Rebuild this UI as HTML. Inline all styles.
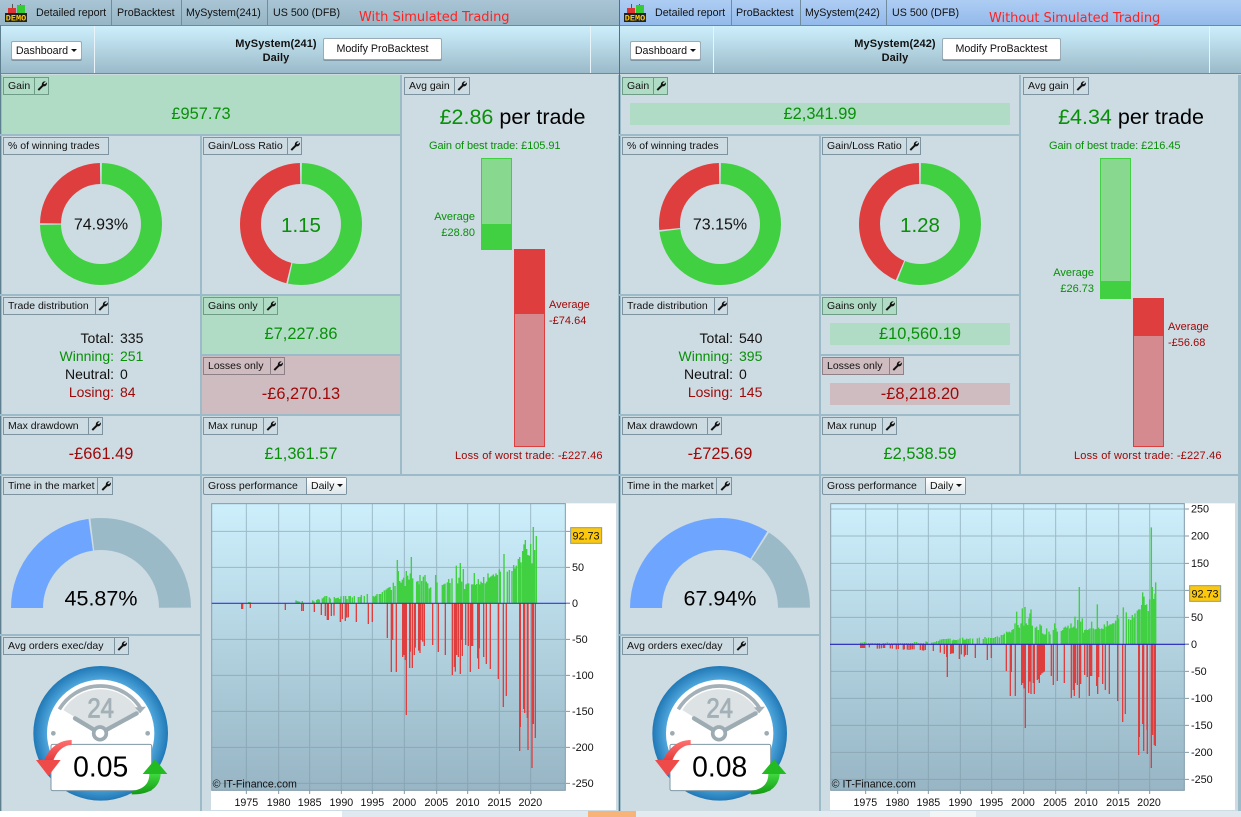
<!DOCTYPE html>
<html><head><meta charset="utf-8"><title>Detailed report</title>
<style>
html,body{margin:0;padding:0;background:#fff}
body{width:1241px;height:817px;overflow:hidden;position:relative;font-family:"Liberation Sans",Arial,sans-serif;font-size:11px;color:#111}
.p{position:absolute;top:0;height:811px;width:622px;overflow:hidden;background:#cddbe2}
.p div,.p svg,.p span.a{position:absolute}
.tb{left:0;top:0;width:622px;height:25px;background:linear-gradient(#a9c5d5,#96b5c5)}
.p2 .tb{background:linear-gradient(#aecdf3,#93baeb)}
.tt{top:5px;line-height:16px;white-space:nowrap;color:#111;font-size:10.7px}
.ts{top:0;width:1px;height:25px;background:#6f8d9e}
.hd{left:0;top:25px;width:622px;height:49px;background:linear-gradient(#cdeffc,#9bbac9);border-bottom:1px solid #6d8a99;border-top:1px solid #6d8a99;box-sizing:border-box}
.hs{top:26px;width:1px;height:47px;background:#e8f4f9}
.btn{background:#fff;border:1px solid #98abb6;border-radius:2px;box-sizing:border-box;text-align:center;box-shadow:0 1px 0 #7f97a5;white-space:nowrap;font-size:10.7px}
.arrow{display:inline-block;width:0;height:0;border:3px solid transparent;border-top:3px solid #111;border-bottom:0;margin-left:3px;vertical-align:2px}
.ln{background:#9dbac8}
.lb{height:18px;box-sizing:border-box;border:1px solid #7d939f;white-space:nowrap;line-height:17px}
.lb span{position:absolute;left:4px;top:0;font-size:10.5px;line-height:17px;color:#111}
.lb i{position:absolute;top:0;bottom:0;width:1px;background:#7d939f}
.lb svg{top:3px;width:10px;height:10px;margin-left:1px}
.g{background:#b0dbc4}.r{background:#cfbcc0}
.lg{border-color:#6f9c86;background:#b0dbc4}.lg i{background:#6f9c86}
.lr{border-color:#8d8087;background:#cfbcc0}.lr i{background:#8d8087}
.v{font-size:16.4px;line-height:20px;text-align:center;white-space:nowrap}
.gc{color:#089008}.rc{color:#a00808}
.sm{font-size:11px;line-height:14px;white-space:nowrap}
.d{font-size:14px;line-height:18px;white-space:nowrap}
.gr{stroke:#7f9aa8;stroke-width:3;opacity:.6;fill:none}
.dy{background:linear-gradient(#fff,#dde6ea);line-height:17px;padding-left:4px;box-sizing:border-box;white-space:nowrap;font-size:10.5px}
</style></head><body>
<svg width="0" height="0" style="position:absolute"><defs>
<symbol id="w" viewBox="0 0 12 12"><path d="M10.6 .7a3.5 3.5 0 0 0-4.7 4.1L.7 10 2.4 11.7l5.2-5.3a3.5 3.5 0 0 0 4-4.7L9.7 3.8 8.2 3.7 8 2.4z" fill="#111"/></symbol>
<radialGradient id="ring"><stop offset="80%" stop-color="#4fa6dc"/><stop offset="100%" stop-color="#2078b6"/></radialGradient>
<linearGradient id="ra" x1="0" y1="0" x2="0" y2="1"><stop offset="0" stop-color="#ff7070"/><stop offset="1" stop-color="#e43b3b"/></linearGradient>
<linearGradient id="ga" x1="0" y1="0" x2="0" y2="1"><stop offset="0" stop-color="#3fd83f"/><stop offset="1" stop-color="#129a12"/></linearGradient>
<linearGradient id="pg" x1="0" y1="0" x2="0" y2="1"><stop offset="0" stop-color="#cdeffc"/><stop offset="1" stop-color="#97b5c4"/></linearGradient>
</defs></svg>

<!-- LEFT PANEL -->
<div class="p p1" style="left:0">
<div class="tb"></div>
<svg style="left:5px;top:4px" width="23" height="18" viewBox="0 0 23 18"><rect x="7" y="0" width="1" height="11" fill="#555"/><rect x="3" y="4" width="8" height="6" fill="#d33"/><rect x="15" y="0" width="1" height="9" fill="#555"/><rect x="12" y="1" width="8" height="8" fill="#3c3"/><rect x="0" y="9" width="22" height="9" fill="#222"/><text x="11" y="16.5" font-size="8.5" font-weight="bold" text-anchor="middle" fill="#fc0" font-family="Liberation Mono">DEMO</text></svg>
<div class="tt" style="left:36px">Detailed report</div><div class="ts" style="left:111px"></div>
<div class="tt" style="left:117px">ProBacktest</div><div class="ts" style="left:181px"></div>
<div class="tt" style="left:186px">MySystem(241)</div><div class="ts" style="left:267px"></div>
<div class="tt" style="left:273px">US 500 (DFB)</div>
<div style="left:359px;top:10px;font:13px/16px 'DejaVu Sans',sans-serif;color:#f22;white-space:nowrap;letter-spacing:-.03px">With Simulated Trading</div>
<div class="hd"></div><div class="hs" style="left:94px"></div><div class="hs" style="left:590px"></div>
<div class="btn" style="left:11px;top:41px;width:71px;height:19px;line-height:18px">Dashboard<span class="arrow"></span></div>
<div style="left:206px;top:37px;width:140px;text-align:center;font-weight:bold;line-height:14px;font-size:11px;letter-spacing:.1px;color:#111">MySystem(241)<br>Daily</div>
<div class="btn" style="left:323px;top:38px;width:119px;height:22px;line-height:21px">Modify ProBacktest</div>

<div class="g" style="left:2px;top:75px;width:398px;height:59px"></div>
<div class="g" style="left:202px;top:296px;width:198px;height:58px"></div>
<div class="r" style="left:202px;top:356px;width:198px;height:58px"></div>

<div style="left:0;top:25px;width:1px;height:786px;background:#5d7f90"></div>
<div class="ln" style="left:1px;top:75px;width:1px;height:736px"></div>
<div class="ln" style="left:200px;top:134px;width:2px;height:677px"></div>
<div class="ln" style="left:400px;top:75px;width:2px;height:400px"></div>
<div class="ln" style="left:0;top:134px;width:400px;height:2px"></div>
<div class="ln" style="left:0;top:294px;width:400px;height:2px"></div>
<div class="ln" style="left:200px;top:354px;width:200px;height:2px"></div>
<div class="ln" style="left:0;top:414px;width:400px;height:2px"></div>
<div class="ln" style="left:0;top:474px;width:619px;height:2px"></div>
<div class="ln" style="left:0;top:634px;width:200px;height:2px"></div>
<div class="ln" style="left:618px;top:75px;width:1px;height:736px"></div>

<div class="lb lg" style="left:3px;top:77px;width:46px"><span>Gain</span><i style="left:30px"></i><svg style="left:32px"><use href="#w"/></svg></div>
<div class="v gc" style="left:101px;top:104px;width:200px">£957.73</div>

<div class="lb" style="left:3px;top:137px;width:106px"><span>% of winning trades</span></div>
<svg style="left:30px;top:153px" width="142" height="142" viewBox="0 0 142 142"><g transform="rotate(-90 71 71)" fill="none" stroke-width="21"><circle cx="71" cy="71" r="50.5" pathLength="100" stroke="#41d041" stroke-dasharray="74.5 100" stroke-dashoffset="-.25"/><circle cx="71" cy="71" r="50.5" pathLength="100" stroke="#df3e3e" stroke-dasharray="0 75.2 24.5 100"/></g><text x="71" y="76.5" font-size="16" text-anchor="middle" fill="#111" font-family="Liberation Sans">74.93%</text></svg>

<div class="lb" style="left:203px;top:137px;width:99px"><span>Gain/Loss Ratio</span><i style="left:83px"></i><svg style="left:85px"><use href="#w"/></svg></div>
<svg style="left:230px;top:153px" width="142" height="142" viewBox="0 0 142 142"><g transform="rotate(-90 71 71)" fill="none" stroke-width="21"><circle cx="71" cy="71" r="50.5" pathLength="100" stroke="#41d041" stroke-dasharray="53.2 100" stroke-dashoffset="-.25"/><circle cx="71" cy="71" r="50.5" pathLength="100" stroke="#df3e3e" stroke-dasharray="0 53.9 45.8 100"/></g><text x="71" y="79" font-size="20.5" text-anchor="middle" fill="#089008" font-family="Liberation Sans">1.15</text></svg>

<div class="lb" style="left:3px;top:297px;width:106px"><span>Trade distribution</span><i style="left:91px"></i><svg style="left:93px"><use href="#w"/></svg></div>
<div class="d" style="left:14px;top:329px;width:100px;text-align:right">Total:</div><div class="d" style="left:120px;top:329px">335</div>
<div class="d gc" style="left:14px;top:347px;width:100px;text-align:right">Winning:</div><div class="d gc" style="left:120px;top:347px">251</div>
<div class="d" style="left:14px;top:365px;width:100px;text-align:right">Neutral:</div><div class="d" style="left:120px;top:365px">0</div>
<div class="d rc" style="left:14px;top:383px;width:100px;text-align:right">Losing:</div><div class="d rc" style="left:120px;top:383px">84</div>

<div class="lb lg" style="left:203px;top:297px;width:75px"><span>Gains only</span><i style="left:59px"></i><svg style="left:61px"><use href="#w"/></svg></div>
<div class="v gc" style="left:201px;top:324px;width:200px">£7,227.86</div>
<div class="lb lr" style="left:203px;top:357px;width:82px"><span>Losses only</span><i style="left:66px"></i><svg style="left:68px"><use href="#w"/></svg></div>
<div class="v rc" style="left:201px;top:384px;width:200px">-£6,270.13</div>

<div class="lb" style="left:3px;top:417px;width:100px"><span>Max drawdown</span><i style="left:84px"></i><svg style="left:86px"><use href="#w"/></svg></div>
<div class="v rc" style="left:1px;top:444px;width:200px">-£661.49</div>
<div class="lb" style="left:203px;top:417px;width:75px"><span>Max runup</span><i style="left:59px"></i><svg style="left:61px"><use href="#w"/></svg></div>
<div class="v gc" style="left:201px;top:444px;width:200px">£1,361.57</div>

<div class="lb" style="left:404px;top:77px;width:66px"><span>Avg gain</span><i style="left:49px"></i><svg style="left:51px"><use href="#w"/></svg></div>
<div style="left:402px;top:104px;width:221px;text-align:center;font-size:21.5px;line-height:26px;white-space:nowrap;color:#000"><span class="gc">£2.86</span> per trade</div>
<div class="sm gc" style="left:429px;top:139px;letter-spacing:-.07px">Gain of best trade: £105.91</div>
<div style="left:481px;top:158px;width:31px;height:92px;box-sizing:border-box;border:1px solid #41d041;background:#88d890"></div>
<div style="left:481px;top:224px;width:31px;height:26px;background:#41d041"></div>
<div style="left:514px;top:249px;width:31px;height:198px;box-sizing:border-box;border:1px solid #df3e3e;background:#d58a90"></div>
<div style="left:514px;top:249px;width:31px;height:65px;background:#df3e3e"></div>
<div class="sm gc" style="left:415px;top:210px;width:60px;text-align:right">Average</div>
<div class="sm gc" style="left:415px;top:226px;width:60px;text-align:right">£28.80</div>
<div class="sm rc" style="left:549px;top:298px">Average</div>
<div class="sm rc" style="left:549px;top:314px">-£74.64</div>
<div class="sm rc" style="left:455px;top:449px;letter-spacing:.18px">Loss of worst trade: -£227.46</div>

<div class="lb" style="left:3px;top:477px;width:110px"><span>Time in the market</span><i style="left:93px"></i><svg style="left:96px"><use href="#w"/></svg></div>
<svg style="left:0;top:510px" width="200" height="110" viewBox="0 0 200 110"><g fill="none" stroke-width="32"><path d="M27 98A74 74 0 0 1 175 98" pathLength="100" stroke="#6ea6ff" stroke-dasharray="45.6 100"/><path d="M27 98A74 74 0 0 1 175 98" pathLength="100" stroke="#9bbac8" stroke-dasharray="0 46.3 53.7 100"/></g><text x="101" y="95.5" font-size="21.5" text-anchor="middle" fill="#000" font-family="Liberation Sans">45.87%</text></svg>

<div class="lb" style="left:3px;top:637px;width:126px"><span>Avg orders exec/day</span><i style="left:110px"></i><svg style="left:112px"><use href="#w"/></svg></div>
<svg style="left:0;top:630px" width="210" height="187" viewBox="0 0 630 561">
<circle cx="302" cy="310" r="202" fill="url(#ring)"/><circle cx="302" cy="310" r="161" fill="#fff"/>
<path d="M302 310L190 240A132 132 0 0 1 414 240Z" fill="#dde2e4"/>
<path d="M178 238A143 143 0 0 1 424 238" fill="none" stroke="#a3b0b7" stroke-width="11"/><path d="M405 232L438 230 420 250Z" fill="#a3b0b7"/>
<text x="262" y="262" font-size="84" textLength="80" lengthAdjust="spacingAndGlyphs" fill="#a3b0b7" stroke="#a3b0b7" stroke-width="2.5" font-family="Liberation Sans">24</text>
<path d="M300 310L225 265M300 310L410 250" stroke="#9dabb3" stroke-width="13" stroke-linecap="round"/>
<circle cx="300" cy="310" r="19" fill="#fff" stroke="#9dabb3" stroke-width="11"/><circle cx="160" cy="310" r="7" fill="#9dabb3"/><circle cx="443" cy="310" r="7" fill="#9dabb3"/>
<rect x="153" y="343" width="302" height="139" rx="5" fill="#fff" stroke="#7f97a5" stroke-width="3"/>
<text x="302" y="440" font-size="85" text-anchor="middle" fill="#000" font-family="Liberation Sans">0.05</text>
<path d="M215 330C180 330 150 350 132 392L160 392C170 365 190 345 215 345Z" fill="url(#ra)"/><path d="M108 390H182L145 438Z" fill="#ee4a4a"/>
<path d="M448 432C448 462 430 478 395 483L395 493C450 495 480 470 482 432Z" fill="url(#ga)"/><path d="M428 432H502L465 388Z" fill="#22bb22"/></svg>

<div class="lb" style="left:203px;top:477px;width:144px;border-radius:2px"><span>Gross performance</span><i style="left:102px"></i></div>
<div class="dy" style="left:307px;top:478px;width:39px;height:16px">Daily<span class="arrow"></span></div>

<svg style="left:200px;top:475px" width="420" height="342" viewBox="0 0 1260 1026">
<rect x="33" y="85" width="1215" height="920" fill="#fff"/>
<rect x="35" y="86" width="1061" height="860" fill="url(#pg)" stroke="#7f9aa8" stroke-width="3"/>
<path class="gr" d="M139 86V946M236 86V946M329 86V946M424 86V946M517 86V946M613 86V946M710 86V946M803 86V946M898 86V946M992 86V946M35 169H1096M35 277H1096M35 493H1096M35 601H1096M35 709H1096M35 817H1096M35 925H1096"/>
<path d="M139 946V957M236 946V957M329 946V957M424 946V957M517 946V957M613 946V957M710 946V957M803 946V957M898 946V957M992 946V957" stroke="#7f9aa8" stroke-width="3"/>
<path fill="none" stroke="#41d041" stroke-width="4.2" d="M146 385V381M150 385V381M288 385V376M291 385V378M295 385V379M299 385V380M307 385V378M338 385V376M342 385V379M350 385V375M354 385V372M358 385V374M367 385V370M371 385V367M375 385V363M380 385V363M388 385V367M391 385V371M403 385V366M407 385V370M411 385V369M415 385V368M419 385V372M423 385V364M431 385V363M437 385V363M441 385V372M447 385V363M451 385V363M457 385V367M463 385V363M475 385V366M480 385V366M484 385V360M493 385V363M502 385V357M519 385V363M523 385V365M527 385V362M531 385V357M538 385V357M542 385V357M547 385V351M553 385V346M558 385V344M562 385V340M566 385V338M570 385V336M574 385V345M580 385V323M585 385V333M592 385V255M595 385V288M599 385V318M603 385V323M607 385V314M611 385V308M615 385V333M619 385V288M623 385V302M627 385V314M631 385V295M634 385V246M638 385V310M650 385V320M654 385V318M658 385V328M660 385V300M665 385V318M670 385V305M675 385V300M679 385V320M683 385V325M688 385V340M692 385V337M707 385V300M711 385V322M727 385V330M731 385V328M735 385V326M742 385V322M746 385V312M750 385V324M756 385V310M769 385V272M773 385V325M777 385V308M781 385V264M785 385V320M790 385V282M794 385V342M798 385V328M802 385V325M806 385V325M815 385V328M819 385V328M823 385V294M827 385V330M830 385V327M835 385V312M839 385V328M843 385V320M847 385V324M851 385V306M856 385V325M860 385V320M864 385V295M868 385V308M872 385V305M876 385V302M880 385V298M884 385V304M888 385V295M892 385V300M898 385V283M901 385V290M912 385V237M922 385V290M928 385V285M936 385V288M941 385V270M945 385V280M949 385V272M955 385V252M959 385V246M963 385V262M968 385V228M972 385V208M976 385V195M980 385V222M984 385V240M988 385V242M992 385V207M996 385V265M1000 385V156M1004 385V225M1009 385V183"/>
<path fill="none" stroke="#df3e3e" stroke-width="4" d="M125 385V402M128 385V402M151 385V399M256 385V405M305 385V408M310 385V408M343 385V411M364 385V420M376 385V423M382 385V435M385 385V435M394 385V423M402 385V422M421 385V441M427 385V432M436 385V438M440 385V428M445 385V427M469 385V441M505 385V447M517 385V441M562 385V489M574 385V591M578 385V495M589 385V591M608 385V546M612 385V540M616 385V555M619 385V720M629 385V579M631 385V530M637 385V579M643 385V540M646 385V518M656 385V527M660 385V534M663 385V495M668 385V500M673 385V513M698 385V510M715 385V531M736 385V540M757 385V600M763 385V576M766 385V590M770 385V540M775 385V546M781 385V597M785 385V495M787 385V543M797 385V510M805 385V513M811 385V591M815 385V513M818 385V513M833 385V550M836 385V582M838 385V520M851 385V546M859 385V567M871 385V582M895 385V612M910 385V696M919 385V663M959 385V828M961 385V756M971 385V702M974 385V714M984 385V825M982 385V729M996 385V879M1000 385V747M1006 385V789"/>
<path d="M35 385H1110" stroke="#3333dd" stroke-width="3.5"/>
<path d="M1098 169H1110M1098 277H1110M1098 385H1110M1098 493H1110M1098 601H1110M1098 709H1110M1098 817H1110M1098 925H1110" stroke="#7f9aa8" stroke-width="3"/>
<g font-family="Liberation Sans" font-size="32.5" fill="#111" text-anchor="start"><text x="1116" y="288">50</text><text x="1116" y="396">0</text><text x="1116" y="504">-50</text><text x="1116" y="612">-100</text><text x="1116" y="720">-150</text><text x="1116" y="828">-200</text><text x="1116" y="936">-250</text></g>
<rect x="1112" y="158" width="93" height="47" fill="#fcc80c" stroke="#7f9aa8" stroke-width="3"/><text x="1158" y="194" font-size="32.5" text-anchor="middle" fill="#111" font-family="Liberation Sans">92.73</text>
<text x="38" y="938" font-size="32" fill="#111" font-family="Liberation Sans">© IT-Finance.com</text>
<g font-family="Liberation Sans" font-size="32" fill="#111" text-anchor="middle"><text x="139" y="993">1975</text><text x="236" y="993">1980</text><text x="329" y="993">1985</text><text x="424" y="993">1990</text><text x="517" y="993">1995</text><text x="613" y="993">2000</text><text x="709" y="993">2005</text><text x="803" y="993">2010</text><text x="898" y="993">2015</text><text x="991" y="993">2020</text></g>
</svg>
</div>

<!-- RIGHT PANEL -->
<div class="p p2" style="left:619px">
<div class="tb"></div>
<svg style="left:5px;top:4px" width="23" height="18" viewBox="0 0 23 18"><rect x="7" y="0" width="1" height="11" fill="#555"/><rect x="3" y="4" width="8" height="6" fill="#d33"/><rect x="15" y="0" width="1" height="9" fill="#555"/><rect x="12" y="1" width="8" height="8" fill="#3c3"/><rect x="0" y="9" width="22" height="9" fill="#222"/><text x="11" y="16.5" font-size="8.5" font-weight="bold" text-anchor="middle" fill="#fc0" font-family="Liberation Mono">DEMO</text></svg>
<div class="tt" style="left:36px">Detailed report</div><div class="ts" style="left:112px"></div>
<div class="tt" style="left:117px">ProBacktest</div><div class="ts" style="left:181px"></div>
<div class="tt" style="left:186px">MySystem(242)</div><div class="ts" style="left:267px"></div>
<div class="tt" style="left:273px">US 500 (DFB)</div>
<div style="left:370px;top:11px;font:13px/16px 'DejaVu Sans',sans-serif;color:#f22;white-space:nowrap;letter-spacing:-.05px">Without Simulated Trading</div>
<div class="hd"></div><div class="hs" style="left:94px"></div><div class="hs" style="left:590px"></div>
<div class="btn" style="left:11px;top:41px;width:71px;height:19px;line-height:18px">Dashboard<span class="arrow"></span></div>
<div style="left:206px;top:37px;width:140px;text-align:center;font-weight:bold;line-height:14px;font-size:11px;letter-spacing:.1px;color:#111">MySystem(242)<br>Daily</div>
<div class="btn" style="left:323px;top:38px;width:119px;height:22px;line-height:21px">Modify ProBacktest</div>

<div class="g" style="left:11px;top:103px;width:380px;height:22px"></div>
<div class="g" style="left:211px;top:323px;width:180px;height:22px"></div>
<div class="r" style="left:211px;top:383px;width:180px;height:22px"></div>

<div style="left:0;top:0;width:1px;height:811px;background:#4f7183"></div>
<div class="ln" style="left:1px;top:75px;width:1px;height:736px"></div>
<div class="ln" style="left:200px;top:134px;width:2px;height:677px"></div>
<div class="ln" style="left:400px;top:75px;width:2px;height:400px"></div>
<div class="ln" style="left:0;top:134px;width:400px;height:2px"></div>
<div class="ln" style="left:0;top:294px;width:400px;height:2px"></div>
<div class="ln" style="left:200px;top:354px;width:200px;height:2px"></div>
<div class="ln" style="left:0;top:414px;width:400px;height:2px"></div>
<div class="ln" style="left:0;top:474px;width:622px;height:2px"></div>
<div class="ln" style="left:0;top:634px;width:200px;height:2px"></div>
<div class="ln" style="left:619px;top:75px;width:3px;height:736px"></div>

<div class="lb lg" style="left:3px;top:77px;width:46px"><span>Gain</span><i style="left:30px"></i><svg style="left:32px"><use href="#w"/></svg></div>
<div class="v gc" style="left:101px;top:104px;width:200px">£2,341.99</div>

<div class="lb" style="left:3px;top:137px;width:106px"><span>% of winning trades</span></div>
<svg style="left:30px;top:153px" width="142" height="142" viewBox="0 0 142 142"><g transform="rotate(-90 71 71)" fill="none" stroke-width="21"><circle cx="71" cy="71" r="50.5" pathLength="100" stroke="#41d041" stroke-dasharray="72.7 100" stroke-dashoffset="-.25"/><circle cx="71" cy="71" r="50.5" pathLength="100" stroke="#df3e3e" stroke-dasharray="0 73.4 26.3 100"/></g><text x="71" y="76.5" font-size="16" text-anchor="middle" fill="#111" font-family="Liberation Sans">73.15%</text></svg>

<div class="lb" style="left:203px;top:137px;width:99px"><span>Gain/Loss Ratio</span><i style="left:83px"></i><svg style="left:85px"><use href="#w"/></svg></div>
<svg style="left:230px;top:153px" width="142" height="142" viewBox="0 0 142 142"><g transform="rotate(-90 71 71)" fill="none" stroke-width="21"><circle cx="71" cy="71" r="50.5" pathLength="100" stroke="#41d041" stroke-dasharray="55.8 100" stroke-dashoffset="-.25"/><circle cx="71" cy="71" r="50.5" pathLength="100" stroke="#df3e3e" stroke-dasharray="0 56.5 43.2 100"/></g><text x="71" y="79" font-size="20.5" text-anchor="middle" fill="#089008" font-family="Liberation Sans">1.28</text></svg>

<div class="lb" style="left:3px;top:297px;width:106px"><span>Trade distribution</span><i style="left:91px"></i><svg style="left:93px"><use href="#w"/></svg></div>
<div class="d" style="left:14px;top:329px;width:100px;text-align:right">Total:</div><div class="d" style="left:120px;top:329px">540</div>
<div class="d gc" style="left:14px;top:347px;width:100px;text-align:right">Winning:</div><div class="d gc" style="left:120px;top:347px">395</div>
<div class="d" style="left:14px;top:365px;width:100px;text-align:right">Neutral:</div><div class="d" style="left:120px;top:365px">0</div>
<div class="d rc" style="left:14px;top:383px;width:100px;text-align:right">Losing:</div><div class="d rc" style="left:120px;top:383px">145</div>

<div class="lb lg" style="left:203px;top:297px;width:75px"><span>Gains only</span><i style="left:59px"></i><svg style="left:61px"><use href="#w"/></svg></div>
<div class="v gc" style="left:201px;top:324px;width:200px">£10,560.19</div>
<div class="lb lr" style="left:203px;top:357px;width:82px"><span>Losses only</span><i style="left:66px"></i><svg style="left:68px"><use href="#w"/></svg></div>
<div class="v rc" style="left:201px;top:384px;width:200px">-£8,218.20</div>

<div class="lb" style="left:3px;top:417px;width:100px"><span>Max drawdown</span><i style="left:84px"></i><svg style="left:86px"><use href="#w"/></svg></div>
<div class="v rc" style="left:1px;top:444px;width:200px">-£725.69</div>
<div class="lb" style="left:203px;top:417px;width:75px"><span>Max runup</span><i style="left:59px"></i><svg style="left:61px"><use href="#w"/></svg></div>
<div class="v gc" style="left:201px;top:444px;width:200px">£2,538.59</div>

<div class="lb" style="left:404px;top:77px;width:66px"><span>Avg gain</span><i style="left:49px"></i><svg style="left:51px"><use href="#w"/></svg></div>
<div style="left:402px;top:104px;width:220px;text-align:center;font-size:21.5px;line-height:26px;white-space:nowrap;color:#000"><span class="gc">£4.34</span> per trade</div>
<div class="sm gc" style="left:430px;top:139px;letter-spacing:-.07px">Gain of best trade: £216.45</div>
<div style="left:481px;top:158px;width:31px;height:141px;box-sizing:border-box;border:1px solid #41d041;background:#88d890"></div>
<div style="left:481px;top:281px;width:31px;height:18px;background:#41d041"></div>
<div style="left:514px;top:298px;width:31px;height:149px;box-sizing:border-box;border:1px solid #df3e3e;background:#d58a90"></div>
<div style="left:514px;top:298px;width:31px;height:38px;background:#df3e3e"></div>
<div class="sm gc" style="left:415px;top:266px;width:60px;text-align:right">Average</div>
<div class="sm gc" style="left:415px;top:282px;width:60px;text-align:right">£26.73</div>
<div class="sm rc" style="left:549px;top:320px">Average</div>
<div class="sm rc" style="left:549px;top:336px">-£56.68</div>
<div class="sm rc" style="left:455px;top:449px;letter-spacing:.18px">Loss of worst trade: -£227.46</div>

<div class="lb" style="left:3px;top:477px;width:110px"><span>Time in the market</span><i style="left:93px"></i><svg style="left:96px"><use href="#w"/></svg></div>
<svg style="left:0;top:510px" width="200" height="110" viewBox="0 0 200 110"><g fill="none" stroke-width="32"><path d="M27 98A74 74 0 0 1 175 98" pathLength="100" stroke="#6ea6ff" stroke-dasharray="67.7 100"/><path d="M27 98A74 74 0 0 1 175 98" pathLength="100" stroke="#9bbac8" stroke-dasharray="0 68.4 31.6 100"/></g><text x="101" y="95.5" font-size="21.5" text-anchor="middle" fill="#000" font-family="Liberation Sans">67.94%</text></svg>

<div class="lb" style="left:3px;top:637px;width:126px"><span>Avg orders exec/day</span><i style="left:110px"></i><svg style="left:112px"><use href="#w"/></svg></div>
<svg style="left:0;top:630px" width="210" height="187" viewBox="0 0 630 561">
<circle cx="302" cy="310" r="202" fill="url(#ring)"/><circle cx="302" cy="310" r="161" fill="#fff"/>
<path d="M302 310L190 240A132 132 0 0 1 414 240Z" fill="#dde2e4"/>
<path d="M178 238A143 143 0 0 1 424 238" fill="none" stroke="#a3b0b7" stroke-width="11"/><path d="M405 232L438 230 420 250Z" fill="#a3b0b7"/>
<text x="262" y="262" font-size="84" textLength="80" lengthAdjust="spacingAndGlyphs" fill="#a3b0b7" stroke="#a3b0b7" stroke-width="2.5" font-family="Liberation Sans">24</text>
<path d="M300 310L225 265M300 310L410 250" stroke="#9dabb3" stroke-width="13" stroke-linecap="round"/>
<circle cx="300" cy="310" r="19" fill="#fff" stroke="#9dabb3" stroke-width="11"/><circle cx="160" cy="310" r="7" fill="#9dabb3"/><circle cx="443" cy="310" r="7" fill="#9dabb3"/>
<rect x="153" y="343" width="302" height="139" rx="5" fill="#fff" stroke="#7f97a5" stroke-width="3"/>
<text x="302" y="440" font-size="85" text-anchor="middle" fill="#000" font-family="Liberation Sans">0.08</text>
<path d="M215 330C180 330 150 350 132 392L160 392C170 365 190 345 215 345Z" fill="url(#ra)"/><path d="M108 390H182L145 438Z" fill="#ee4a4a"/>
<path d="M448 432C448 462 430 478 395 483L395 493C450 495 480 470 482 432Z" fill="url(#ga)"/><path d="M428 432H502L465 388Z" fill="#22bb22"/></svg>

<div class="lb" style="left:203px;top:477px;width:144px;border-radius:2px"><span>Gross performance</span><i style="left:102px"></i></div>
<div class="dy" style="left:307px;top:478px;width:39px;height:16px">Daily<span class="arrow"></span></div>

<svg style="left:201px;top:475px" width="420" height="342" viewBox="0 0 1260 1026">
<rect x="30" y="85" width="1215" height="920" fill="#fff"/>
<rect x="32" y="86" width="1061" height="860" fill="url(#pg)" stroke="#7f9aa8" stroke-width="3"/>
<path class="gr" d="M137 86V946M233 86V946M325 86V946M421 86V946M515 86V946M611 86V946M707 86V946M799 86V946M896 86V946M989 86V946M32 102H1093M32 183H1093M32 265H1093M32 346H1093M32 427H1093M32 589H1093M32 670H1093M32 751H1093M32 832H1093M32 913H1093"/>
<path d="M137 946V957M233 946V957M325 946V957M421 946V957M515 946V957M611 946V957M707 946V957M799 946V957M896 946V957M989 946V957" stroke="#7f9aa8" stroke-width="3"/>
<path fill="none" stroke="#41d041" stroke-width="4.2" d="M122 508V503M127 508V503M133 508V501M138 508V503M146 508V504M153 508V504M158 508V504M165 508V504M172 508V504M178 508V504M190 508V504M196 508V504M202 508V502M208 508V504M215 508V504M222 508V504M228 508V504M235 508V504M241 508V504M247 508V504M253 508V504M259 508V504M265 508V504M272 508V504M278 508V504M284 508V501M290 508V501M296 508V504M303 508V504M310 508V504M318 508V499M322 508V501M335 508V503M340 508V502M345 508V501M350 508V498M356 508V498M360 508V494M365 508V493M370 508V492M375 508V492M380 508V492M385 508V491M390 508V491M397 508V496M401 508V494M405 508V495M409 508V495M414 508V494M420 508V490M428 508V488M432 508V494M436 508V494M440 508V491M445 508V492M450 508V490M458 508V491M472 508V490M478 508V488M490 508V492M495 508V486M500 508V490M506 508V488M512 508V489M516 508V489M521 508V489M526 508V486M532 508V484M538 508V487M544 508V480M549 508V480M553 508V476M560 508V470M564 508V472M568 508V470M572 508V472M576 508V465M580 508V462M585 508V445M590 508V410M594 508V450M598 508V458M603 508V445M607 508V400M611 508V452M615 508V396M619 508V445M623 508V450M627 508V430M630 508V415M633 508V403M637 508V452M646 508V458M650 508V455M655 508V465M660 508V448M664 508V452M668 508V475M672 508V478M676 508V478M680 508V460M687 508V470M690 508V478M700 508V465M704 508V445M708 508V460M712 508V470M724 508V468M728 508V465M732 508V458M736 508V455M740 508V458M744 508V452M749 508V460M753 508V445M757 508V458M761 508V455M765 508V425M769 508V460M773 508V435M778 508V336M782 508V440M787 508V430M790 508V473M794 508V465M798 508V463M802 508V465M806 508V463M810 508V460M815 508V440M820 508V460M825 508V463M828 508V462M832 508V388M836 508V458M840 508V462M845 508V460M849 508V462M853 508V448M858 508V455M862 508V438M866 508V452M870 508V448M874 508V448M878 508V445M882 508V445M887 508V437M892 508V420M896 508V430M910 508V397M919 508V412M926 508V432M932 508V435M937 508V420M942 508V428M945 508V415M952 508V407M956 508V403M960 508V403M965 508V390M968 508V352M972 508V365M976 508V390M980 508V388M985 508V408M989 508V373M994 508V157M997 508V336M1001 508V372M1005 508V356M1007 508V322"/>
<path fill="none" stroke="#df3e3e" stroke-width="4" d="M122 508V519M126 508V519M130 508V519M134 508V519M148 508V517M172 508V521M178 508V521M184 508V520M190 508V519M194 508V519M211 508V520M217 508V521M229 508V523M235 508V522M250 508V524M253 508V523M262 508V524M267 508V525M272 508V524M277 508V523M282 508V523M301 508V525M307 508V526M311 508V527M316 508V525M340 508V528M361 508V533M373 508V537M380 508V546M382 508V606M392 508V537M396 508V535M400 508V535M418 508V552M424 508V538M433 508V545M436 508V540M442 508V540M466 508V549M502 508V555M514 508V549M559 508V588M571 508V663M574 508V591M586 508V663M605 508V630M609 508V624M612 508V640M616 508V759M626 508V654M629 508V620M633 508V657M640 508V624M643 508V657M652 508V615M655 508V612M658 508V624M662 508V600M666 508V595M670 508V592M673 508V590M694 508V603M700 508V630M712 508V618M733 508V624M754 508V669M760 508V645M763 508V663M766 508V624M772 508V630M778 508V669M782 508V627M794 508V600M802 508V606M808 508V663M812 508V603M815 508V603M830 508V633M833 508V657M836 508V606M848 508V627M856 508V645M868 508V657M893 508V678M908 508V741M916 508V717M956 508V840M958 508V786M968 508V747M971 508V828M981 508V765M982 508V837M994 508V879M998 508V780M1003 508V810M1006 508V813"/>
<path d="M30 508H1107" stroke="#2222bb" stroke-width="3.5"/>
<path d="M1095 102H1107M1095 183H1107M1095 265H1107M1095 346H1107M1095 427H1107M1095 508H1107M1095 589H1107M1095 670H1107M1095 751H1107M1095 832H1107M1095 913H1107" stroke="#7f9aa8" stroke-width="3"/>
<g font-family="Liberation Sans" font-size="32.5" fill="#111"><text x="1113" y="113">250</text><text x="1113" y="194">200</text><text x="1113" y="276">150</text><text x="1113" y="438">50</text><text x="1113" y="519">0</text><text x="1113" y="600">-50</text><text x="1113" y="681">-100</text><text x="1113" y="762">-150</text><text x="1113" y="843">-200</text><text x="1113" y="924">-250</text></g>
<rect x="1109" y="332" width="93" height="47" fill="#fcc80c" stroke="#7f9aa8" stroke-width="3"/><text x="1155" y="368" font-size="32.5" text-anchor="middle" fill="#111" font-family="Liberation Sans">92.73</text>
<text x="35" y="938" font-size="32" fill="#111" font-family="Liberation Sans">© IT-Finance.com</text>
<g font-family="Liberation Sans" font-size="32" fill="#111" text-anchor="middle"><text x="136" y="993">1975</text><text x="232" y="993">1980</text><text x="325" y="993">1985</text><text x="421" y="993">1990</text><text x="514" y="993">1995</text><text x="609" y="993">2000</text><text x="705" y="993">2005</text><text x="798" y="993">2010</text><text x="894" y="993">2015</text><text x="987" y="993">2020</text></g>
</svg>
</div>

<!-- BOTTOM STRIP -->
<div style="position:absolute;left:0;top:811px;width:342px;height:6px;background:#fff"></div>
<div style="position:absolute;left:342px;top:811px;width:246px;height:6px;background:#dfe9ef"></div>
<div style="position:absolute;left:588px;top:811px;width:48px;height:6px;background:#f8b478"></div>
<div style="position:absolute;left:636px;top:811px;width:294px;height:6px;background:#e2ebef"></div>
<div style="position:absolute;left:930px;top:811px;width:46px;height:6px;background:#f2f5f6"></div>
<div style="position:absolute;left:976px;top:811px;width:265px;height:6px;background:#dfe8ef"></div>
</body></html>
